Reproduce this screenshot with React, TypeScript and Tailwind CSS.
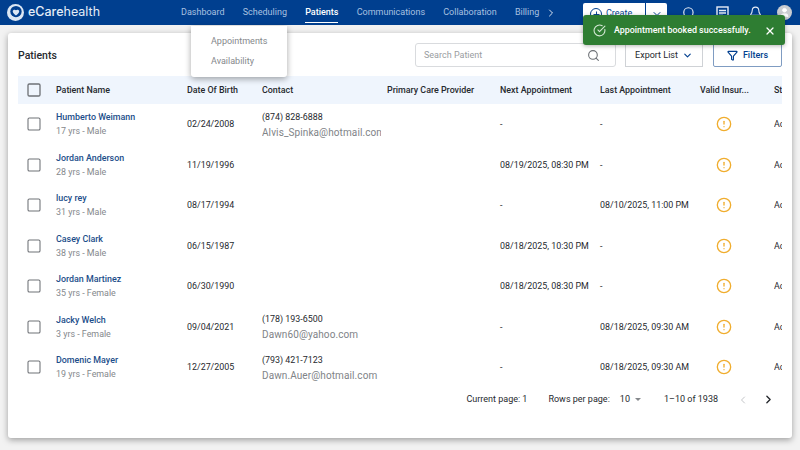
import React from 'react';
import { Search, ChevronDown, ChevronRight, ChevronLeft, Filter, Plus, Bell, User, X, CircleCheckBig, CircleAlert, Square } from 'lucide-react';

interface Patient {
    name: string;
    info: string;
    dob: string;
    phone?: string;
    email?: string;
    next: string;
    last: string;
}

const patients: Patient[] = [
    { name: 'Humberto Weimann', info: '17 yrs - Male', dob: '02/24/2008', phone: '(874) 828-6888', email: 'Alvis_Spinka@hotmail.com', next: '-', last: '-' },
    { name: 'Jordan Anderson', info: '28 yrs - Male', dob: '11/19/1996', next: '08/19/2025, 08:30 PM', last: '-' },
    { name: 'lucy rey', info: '31 yrs - Male', dob: '08/17/1994', next: '-', last: '08/10/2025, 11:00 PM' },
    { name: 'Casey Clark', info: '38 yrs - Male', dob: '06/15/1987', next: '08/18/2025, 10:30 PM', last: '-' },
    { name: 'Jordan Martinez', info: '35 yrs - Female', dob: '06/30/1990', next: '08/18/2025, 08:30 PM', last: '-' },
    { name: 'Jacky Welch', info: '3 yrs - Female', dob: '09/04/2021', phone: '(178) 193-6500', email: 'Dawn60@yahoo.com', next: '-', last: '08/18/2025, 09:30 AM' },
    { name: 'Domenic Mayer', info: '19 yrs - Female', dob: '12/27/2005', phone: '(793) 421-7123', email: 'Dawn.Auer@hotmail.com', next: '-', last: '08/18/2025, 09:30 AM' },
];

const navItems = ['Dashboard', 'Scheduling', 'Patients', 'Communications', 'Collaboration', 'Billing'];

const gridCols = 'grid grid-cols-[38px_131px_75px_125px_113px_100px_100px_74px_1fr]';

const Logo = () => (
    <svg width="17" height="17" viewBox="0 0 18 18" fill="none">
        <circle cx="9" cy="9" r="9" fill="#dbe7f4" />
        <circle cx="9.5" cy="8" r="6" fill="#003f8f" />
        <path d="M6 7.5c.8-1.8 2.6-1.8 3.5-.8.9-1 2.7-1 3.5.8 0 2.6-2.4 3.8-3.5 4.8-1.1-1-3.5-2.2-3.5-4.8z" fill="#dbe7f4" />
    </svg>
);

const ArticleIcon = () => (
    <svg width="13" height="14" viewBox="0 0 13 14" fill="none" stroke="#e8eef7" strokeWidth="1.4">
        <rect x="1" y="1" width="11" height="12" />
        <path d="M3 4.5h7M3 7h7M3 9.5h4" />
    </svg>
);

export default function App() {
    return (
        <div className="relative w-[800px] h-[450px] overflow-hidden bg-[#f2f2f2] font-['Roboto',sans-serif] text-[#26292e]">
            {/* Top bar */}
            <header className="h-[25px] bg-[#003f8f] flex items-center pl-[7px]">
                <div className="flex items-center w-[174px] gap-[4px]">
                    <Logo />
                    <span className="text-[12.5px] text-[#e4edf7] font-['Inter',sans-serif] leading-none">
                        <span className="font-medium">eCare</span>health
                    </span>
                </div>
                <nav className="flex items-center gap-[18.2px] pt-[1px] text-[9px] w-[402px]">
                    {navItems.map((item) => (
                        <span
                            key={item}
                            className={item === 'Patients' ? 'relative text-white font-medium' : 'text-[#a9c1e0]'}
                        >
                            {item}
                            {item === 'Patients' && <span className="absolute left-0 right-0 -bottom-[3px] h-px bg-white" />}
                        </span>
                    ))}
                    <ChevronRight size={12} className="text-[#dbe5f2] -ml-[12px]" />
                </nav>
                <div className="flex items-center h-[22px] mt-[3px] w-[84px] bg-white rounded-t-[2px]">
                    <div className="flex items-center gap-[4px] flex-1 pl-[7px] text-[9px] text-[#003f8f]">
                        <span className="w-[12px] h-[12px] rounded-full border border-[#003f8f] flex items-center justify-center">
                            <Plus size={9} strokeWidth={2.5} />
                        </span>
                        Create
                    </div>
                    <div className="w-[22px] h-full border-l border-[#003f8f] flex items-center justify-center text-[#003f8f]">
                        <ChevronDown size={12} />
                    </div>
                </div>
                <div className="flex items-center ml-[15px] gap-[20px] text-[#e8eef7]">
                    <Search size={14} />
                    <ArticleIcon />
                    <Bell size={13} />
                </div>
                <div className="ml-[15px] w-[15px] h-[15px] rounded-full bg-[#c9ccd1] flex items-center justify-center text-white">
                    <User size={11} fill="white" />
                </div>
            </header>

            {/* Card */}
            <main className="mx-[8px] mt-[8px] h-[405px] bg-white rounded-[3px] shadow-[0_2px_6px_rgba(0,0,0,0.35)] px-[10px] pt-[10px]">
                <div className="flex items-center h-[24px] mb-[9px]">
                    <h1 className="text-[10.5px] font-medium leading-none pt-[2px] w-[397px]">Patients</h1>
                    <div className="w-[201px] h-[24px] border border-[#d9dbde] rounded-[3px] flex items-center justify-between pl-[8px] pr-[15px]">
                        <span className="text-[9px] text-[#9a9da1] pt-[1px]">Search Patient</span>
                        <Search size={13} className="text-[#6c7075]" />
                    </div>
                    <div className="ml-[9px] w-[78px] h-[24px] border border-[#cfd2d6] flex items-center justify-center gap-[4px] text-[9px]">
                        <span className="pt-[1px]">Export List</span>
                        <ChevronDown size={11} className="text-[#003f8f]" strokeWidth={2.5} />
                    </div>
                    <div className="ml-[10px] w-[69px] h-[24px] border border-[#7f9cc2] rounded-[2px] flex items-center justify-center gap-[5px] text-[9px] font-medium text-[#003f8f]">
                        <Filter size={11} strokeWidth={2.5} />
                        <span className="pt-[1px]">Filters</span>
                    </div>
                </div>

                {/* Table */}
                <div className={`${gridCols} h-[28px] items-center bg-[#eff5fd] text-[8.9px] font-medium overflow-hidden`}>
                    <Square size={16} strokeWidth={2} className="ml-[7.5px] text-[#6f7277]" />
                    <span className="pt-[1px]">Patient Name</span>
                    <span className="pt-[1px]">Date Of Birth</span>
                    <span className="pt-[1px]">Contact</span>
                    <span className="pt-[1px]">Primary Care Provider</span>
                    <span className="pt-[1px]">Next Appointment</span>
                    <span className="pt-[1px]">Last Appointment</span>
                    <span className="pt-[1px]">Valid Insur...</span>
                    <span className="pt-[1px] overflow-hidden">Status</span>
                </div>

                {patients.map((p) => (
                    <div key={p.name} className={`${gridCols} h-[40.5px] items-center text-[8.9px] overflow-hidden`}>
                        <Square size={16} strokeWidth={1.6} className="ml-[7.5px] text-[#6f7277]" />
                        <div className="flex flex-col gap-[3px] pt-[1px]">
                            <span className="font-medium text-[#1c4e8a] leading-[11px]">{p.name}</span>
                            <span className="text-[#85888c] leading-[11px]">{p.info}</span>
                        </div>
                        <span className="pt-[1px]">{p.dob}</span>
                        <div className="w-[119px] flex flex-col gap-[3px] pt-[1px] whitespace-nowrap overflow-hidden">
                            {p.phone && <span className="leading-[12px]">{p.phone}</span>}
                            {p.email && <span className="text-[10px] text-[#808387] leading-[13px] tracking-[0.1px]">{p.email}</span>}
                        </div>
                        <span />
                        <span className="pt-[1px]">{p.next}</span>
                        <span className="pt-[1px]">{p.last}</span>
                        <CircleAlert size={16} className="ml-[16px] text-[#f0ad2e]" />
                        <span className="pt-[1px] overflow-hidden">Active</span>
                    </div>
                ))}

                {/* Pagination */}
                <div className="flex items-center justify-end h-[20px] mt-[2px] text-[9px]">
                    <span className="pt-[1px]">Current page: 1</span>
                    <span className="ml-[21px] pt-[1px]">Rows per page:</span>
                    <span className="ml-[10px] pt-[1px]">10</span>
                    <span className="ml-[5px] w-0 h-0 border-x-[3px] border-x-transparent border-t-[3px] border-t-[#85888c]" />
                    <span className="ml-[23px] pt-[1px]">1–10 of 1938</span>
                    <ChevronLeft size={12} className="ml-[19px] text-[#c3c5c8]" />
                    <ChevronRight size={13} strokeWidth={2.5} className="ml-[13px] mr-[7px]" />
                </div>
            </main>

            {/* Scheduling dropdown */}
            <div className="absolute left-[191px] top-[26px] w-[96px] h-[51px] bg-white rounded-b-[3px] shadow-[0_2px_6px_rgba(0,0,0,0.35)] flex flex-col gap-[9px] pl-[20px] pt-[10px] text-[9px] text-[#85888c]">
                <span className="leading-[11px]">Appointments</span>
                <span className="leading-[11px]">Availability</span>
            </div>

            {/* Toast */}
            <div className="absolute left-[583px] top-[15px] w-[202px] h-[30px] bg-[#2e7d32] rounded-[3px] shadow-[0_1px_4px_rgba(0,0,0,0.3)] flex items-center pl-[10px] text-white">
                <CircleCheckBig size={13} className="text-[#d5e8d6]" />
                <span className="ml-[8px] text-[8.9px] font-medium pt-[1px]">Appointment booked successfully.</span>
                <X size={12} strokeWidth={2.5} className="absolute right-[9px] top-[10px]" />
            </div>
        </div>
    );
}
